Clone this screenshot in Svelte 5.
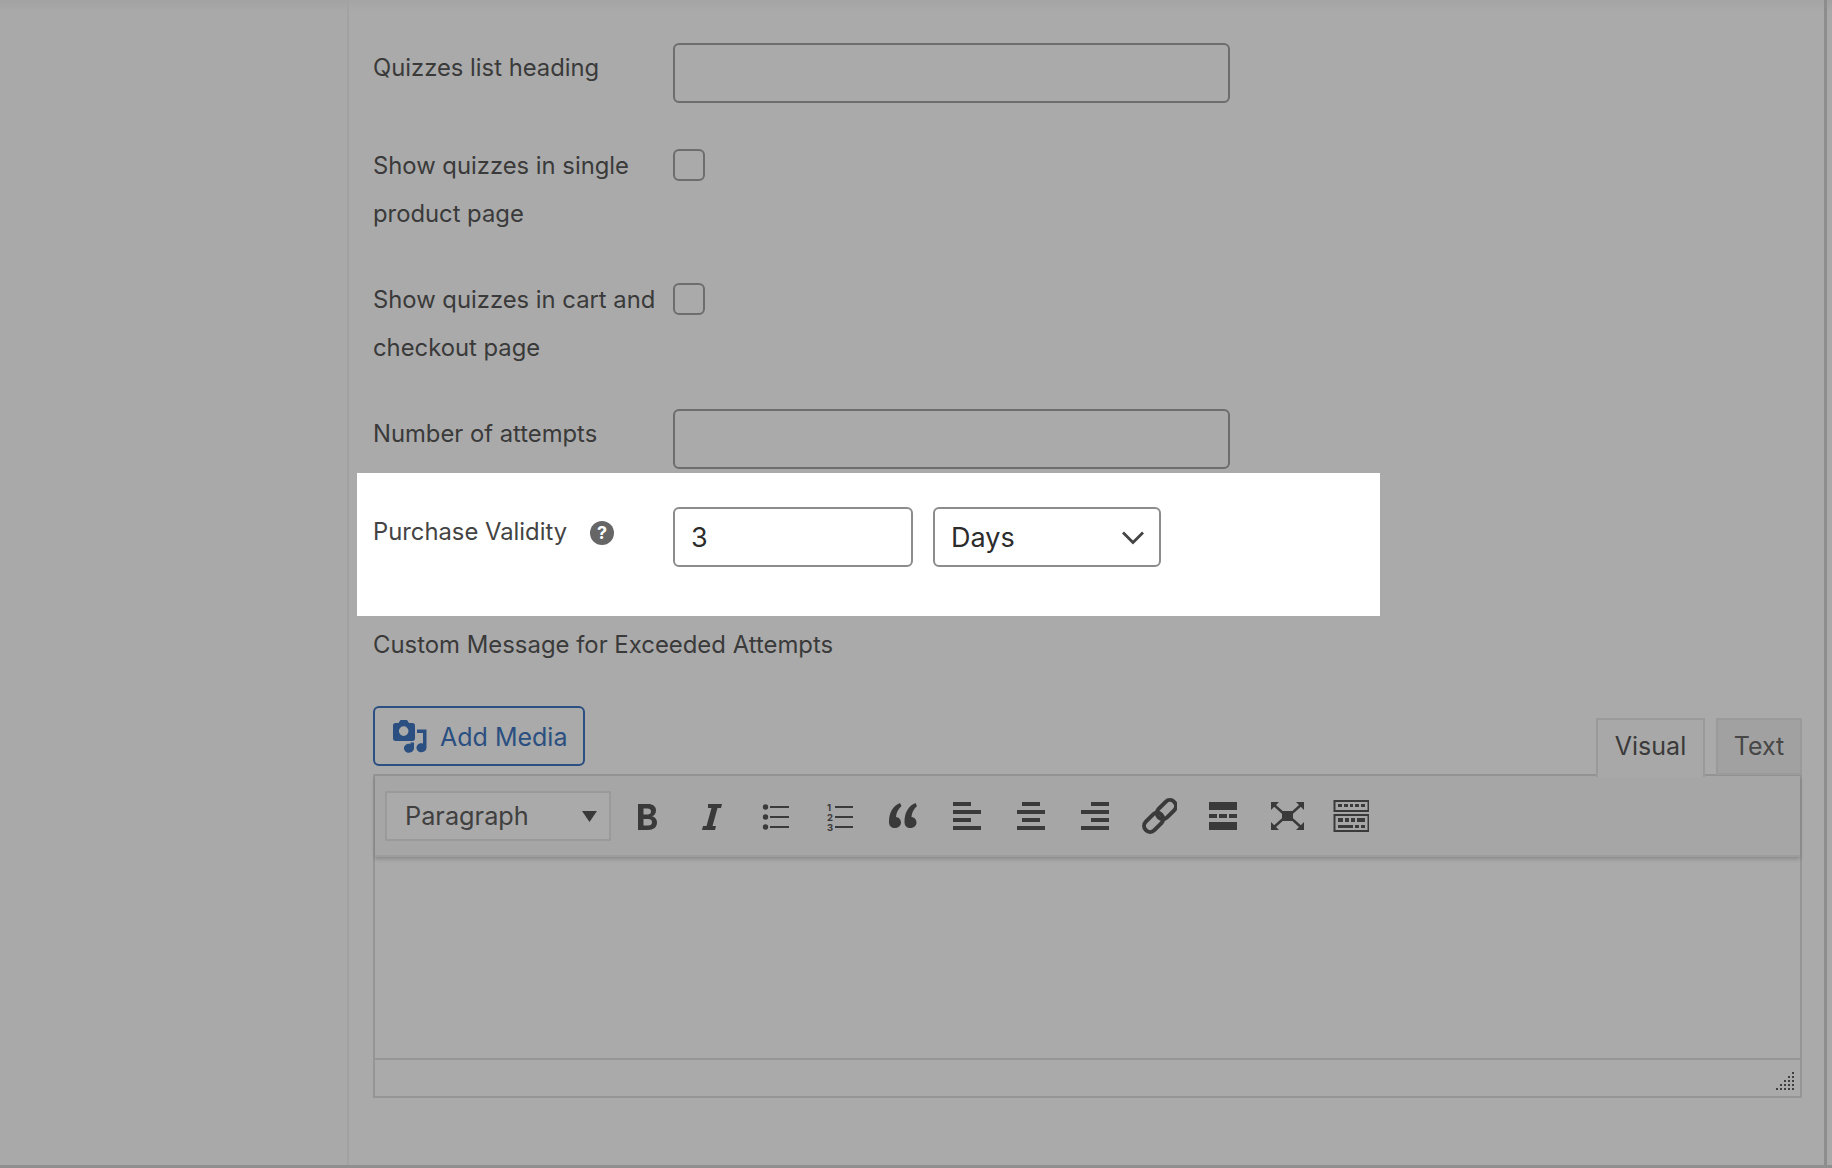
<script>
  const grip = [];
  for (let r = 0; r < 5; r++) for (let c = 4 - r; c < 5; c++) grip.push({ x: c * 4, y: r * 4 });
</script>

<div class="page">
  <div class="gutter"></div>
  <div class="panel">
    <div class="row">
      <label class="label" for="q">Quizzes list heading</label>
      <input id="q" class="text" />
    </div>
    <div class="row">
      <label class="label" for="s1">Show quizzes in single product page</label>
      <input id="s1" class="check" type="checkbox" />
    </div>
    <div class="row">
      <label class="label" for="s2">Show quizzes in cart and checkout page</label>
      <input id="s2" class="check" type="checkbox" />
    </div>
    <div class="row tight">
      <label class="label" for="n">Number of attempts</label>
      <input id="n" class="text" />
    </div>

    <div class="row spot">
      <div class="label help-label">
        <span>Purchase Validity</span>
        <span class="help">?</span>
      </div>
      <input class="text small" value="3" />
      <div class="select">
        <span>Days</span>
        <svg width="24" height="15" viewBox="0 0 24 15"><path d="M2 2.500l10 10 10-10" fill="none" stroke="#444" stroke-width="2.800" /></svg>
      </div>
    </div>

    <div class="custom">Custom Message for Exceeded Attempts</div>

    <div class="tools">
      <button class="media">
        <svg width="34" height="33" viewBox="0 0 34 33">
          <path fill-rule="evenodd" d="M7.500 0h6.500l2 3h3.500c1.500 0 2.500 1 2.500 2.500V18.500c0 1.500-1 2.500-2.500 2.500H2.500C1 21 0 20 0 18.500V5.500C0 4 1 3 2.500 3h3zM10.700 6.300a4.800 4.800 0 1 0 0 9.600a4.800 4.800 0 0 0 0-9.600z" />
          <path d="M24 9.500h9.500V27.500c0 2.700-2.200 4.700-5 4.700s-5-2-5-4.500 2.200-4.500 5-4.500c.5 0 1 .1 1.500.2V13H24z" />
          <path d="M17.500 22.500H21V28c0 2.600-2.200 4.700-5 4.700s-5-2-5-4.500 2.200-4.500 5-4.500c.5 0 1 .1 1.500.2z" />
        </svg>
        <span>Add Media</span>
      </button>
      <div class="tabs">
        <span class="tab active">Visual</span>
        <span class="tab">Text</span>
      </div>
    </div>

    <div class="editor">
      <div class="toolbar">
        <div class="format">
          <span>Paragraph</span>
          <svg width="15" height="11" viewBox="0 0 15 11"><path d="M0 0h15l-7.500 11z" /></svg>
        </div>
        <div class="btns">
          <span class="btn"><svg viewBox="0 0 36 36"><path fill-rule="evenodd" d="M9 6h10c5 0 8 2.500 8 6.500 0 3-1.600 5-4 5.800 3 .7 5 3 5 6.200 0 4.600-3.400 7.500-9 7.500H9zM14.500 10.500v6h4c2.300 0 3.500-1.100 3.500-3s-1.200-3-3.500-3zM14.500 21v6.500H19c2.600 0 4-1.200 4-3.300s-1.400-3.200-4-3.200z" /></svg></span>
          <span class="btn"><svg viewBox="0 0 36 36"><path d="M15 6h14l-1 4h-3.500l-5 18H23l-1 4H9l1-4h3.500l5-18H15z" /></svg></span>
          <span class="btn"><svg viewBox="0 0 36 36"><circle cx="8.500" cy="9" r="2.700" /><circle cx="8.500" cy="19" r="2.700" /><circle cx="8.500" cy="29" r="2.700" /><rect x="13" y="8" width="19" height="2" /><rect x="13" y="18" width="19" height="2" /><rect x="13" y="28" width="19" height="2" /></svg></span>
          <span class="btn"><svg viewBox="0 0 36 36"><text x="6" y="13" class="num">1</text><text x="6" y="23" class="num">2</text><text x="6" y="33" class="num">3</text><rect x="14" y="8" width="18" height="2" /><rect x="14" y="18" width="18" height="2" /><rect x="14" y="28" width="18" height="2" /></svg></span>
          <span class="btn"><svg viewBox="0 0 36 36"><path d="M15 5C8 8 4 14 4 24c0 4 2.500 6 6 6 3.500 0 6-2.500 6-5.500s-2.200-5.300-5-5.500c.2-4 2-8 5.500-11z" /><path d="M30.500 5c-7 3-11 9-11 19 0 4 2.500 6 6 6 3.500 0 6-2.500 6-5.500s-2.200-5.300-5-5.500c.2-4 2-8 5.500-11z" /></svg></span>
          <span class="btn"><svg viewBox="0 0 36 36"><rect x="4" y="4" width="18" height="4" /><rect x="4" y="12" width="28" height="4" /><rect x="4" y="20" width="18" height="4" /><rect x="4" y="28" width="28" height="4" /></svg></span>
          <span class="btn"><svg viewBox="0 0 36 36"><rect x="9" y="4" width="18" height="4" /><rect x="4" y="12" width="28" height="4" /><rect x="9" y="20" width="18" height="4" /><rect x="4" y="28" width="28" height="4" /></svg></span>
          <span class="btn"><svg viewBox="0 0 36 36"><rect x="14" y="4" width="18" height="4" /><rect x="4" y="12" width="28" height="4" /><rect x="14" y="20" width="18" height="4" /><rect x="4" y="28" width="28" height="4" /></svg></span>
          <span class="btn"><svg viewBox="0 0 36 36"><g transform="rotate(-45 19 18)" fill="none" stroke="#3a3a3a" stroke-width="4"><rect x="-1" y="12" width="22" height="12" rx="6" /><rect x="17" y="12" width="22" height="12" rx="6" /></g></svg></span>
          <span class="btn"><svg viewBox="0 0 36 36"><rect x="4" y="4" width="28" height="8" /><rect x="4" y="16" width="8" height="4" /><rect x="14" y="16" width="8" height="4" /><rect x="24" y="16" width="8" height="4" /><rect x="4" y="24" width="28" height="8" /></svg></span>
          <span class="btn"><svg viewBox="0 0 36 36"><rect x="13" y="13" width="11" height="10" /><path d="M2 4h8l-8 8zM35 4h-8l8 8zM2 32h8l-8-8zM35 32h-8l8-8z" /><path d="M4 6l10 9M33 6L23 15M4 30l10-9M33 30L23 21" stroke="#3a3a3a" stroke-width="2.400" /></svg></span>
          <span class="btn"><svg viewBox="0 0 36 36"><rect x="1.500" y="3" width="34" height="10" fill="none" stroke="#3a3a3a" stroke-width="2" /><rect x="1.500" y="17" width="34" height="16" fill="none" stroke="#3a3a3a" stroke-width="2" /><path d="M5 6h4v3H5zM11 6h4v3h-4zM17 6h3v3h-3zM22 6h4v3h-4zM28 6h4v3h-4zM5 20h5v4H5zM12 20h4v4h-4zM18 20h4v4h-4zM24 20h8v4h-8zM5 27h15v3H5zM22 27h4v3h-4zM28 27h4v3h-4z" /></svg></span>
        </div>
      </div>
      <div class="area"></div>
      <div class="status">
        <svg class="grip" width="18" height="18" viewBox="0 0 18 18">
          {#each grip as d}<rect x={d.x} y={d.y} width="2" height="2" />{/each}
        </svg>
      </div>
    </div>
  </div>
</div>

<style>
  :global(body) { margin: 0; background: #aaa; }
  .page {
    display: flex;
    width: 1832px;
    height: 1168px;
    box-sizing: border-box;
    background: linear-gradient(#a2a2a2, #a9a9a9 12px, #a9a9a9);
    border-bottom: 3px solid #8f8f8f;
    font-family: Inter, "Liberation Sans", sans-serif;
    color: #3a3a3a;
    overflow: hidden;
  }
  .gutter { width: 347px; flex: none; }
  .panel {
    width: 1480px;
    box-sizing: border-box;
    flex: none;
    padding: 43px 22px 0 24px;
    background: linear-gradient(#a4a4a4, #aaa 12px, #aaa);
    border-left: 2px solid #a2a2a2;
    border-right: 3px solid #8d8d8d;
  }
  .row {
    display: flex;
    align-items: flex-start;
    margin-bottom: 38px;
  }
  .row.tight { margin-bottom: 4px; }
  .label {
    width: 300px;
    flex: none;
    box-sizing: border-box;
    padding-top: 1px;
    margin-bottom: -1px;
    padding-right: 8px;
    font-size: 23.800px;
    line-height: 48px;
    color: #3a3a3a;
  }
  .text {
    width: 557px;
    height: 60px;
    box-sizing: border-box;
    margin: 0;
    padding: 0 16px;
    background: transparent;
    border: 2px solid #6d6d6d;
    border-radius: 6px;
    font: 27px Inter, "Liberation Sans", sans-serif;
    color: #2c2c2c;
  }
  .check {
    appearance: none;
    width: 32px;
    height: 32px;
    margin: 8px 0 0;
    background: transparent;
    border: 2px solid #6d6d6d;
    border-radius: 6px;
  }
  .spot {
    width: 1023px;
    height: 143px;
    box-sizing: border-box;
    margin: 0 0 5px -16px;
    padding: 34px 0 0 16px;
    background: #fff;
  }
  .help-label { display: flex; align-items: center; height: 49px; color: #444; }
  .help {
    display: flex;
    align-items: center;
    justify-content: center;
    width: 24px;
    height: 24px;
    margin: 2px 0 0 23px;
    border-radius: 50%;
    background: #666;
    color: #fff;
    font-size: 18px;
    font-weight: 700;
  }
  .small { width: 240px; border-color: #8c8c8c; }
  .select {
    display: flex;
    align-items: center;
    justify-content: space-between;
    width: 228px;
    height: 60px;
    box-sizing: border-box;
    margin-left: 20px;
    padding: 0 14px 0 16px;
    border: 2px solid #8c8c8c;
    border-radius: 6px;
    font-size: 27px;
    color: #2c2c2c;
  }
  .custom {
    font-size: 23.900px;
    line-height: 48px;
    margin-bottom: 37px;
  }
  .tools {
    display: flex;
    justify-content: space-between;
    align-items: flex-start;
    height: 70px;
  }
  .media {
    display: flex;
    align-items: center;
    gap: 13px;
    width: 212px;
    height: 60px;
    box-sizing: border-box;
    padding: 2px 0 0 18px;
    background: transparent;
    border: 2px solid #2a4f80;
    border-radius: 6px;
    font: 25px Inter, "Liberation Sans", sans-serif;
    color: #2a4f80;
  }
  .media svg { fill: #2a4f80; flex: none; margin-top: -2px; }
  .tabs {
    display: flex;
    gap: 11px;
    align-items: flex-start;
    margin-top: 12px;
    position: relative;
    z-index: 1;
  }
  .tab {
    display: flex;
    align-items: center;
    justify-content: center;
    height: 57px;
    box-sizing: border-box;
    width: 86px;
    padding-bottom: 2px;
    background: #a1a1a1;
    border: 2px solid #9a9a9a;
    font-size: 25px;
    color: #474747;
  }
  .tab.active {
    width: 109px;
    height: 59px;
    padding-bottom: 6px;
    background: #a8a8a8;
    border-bottom: none;
    color: #3a3a3a;
  }
  .editor {
    border: 2px solid #959595;
    height: 324px;
    box-sizing: border-box;
    margin-top: -2px;
    display: flex;
    flex-direction: column;
  }
  .toolbar {
    display: flex;
    align-items: center;
    height: 81px;
    flex: none;
    box-sizing: border-box;
    padding: 0 0 0 10px;
    background: #a6a6a6;
    box-shadow: 0 2px 4px rgba(0, 0, 0, 0.2);
    border-bottom: 2px solid #9c9c9c;
    position: relative;
  }
  .format {
    display: flex;
    align-items: center;
    justify-content: space-between;
    width: 226px;
    height: 50px;
    box-sizing: border-box;
    padding: 0 12px 0 18px;
    background: #aaa;
    border: 2px solid #9a9a9a;
    font-size: 25.300px;
    color: #404040;
  }
  .format svg { fill: #3a3a3a; margin-top: 2px; }
  .btns { display: flex; margin-left: 4px; }
  .btn {
    display: flex;
    align-items: center;
    justify-content: center;
    width: 64px;
    height: 50px;
  }
  .btn svg { width: 36px; height: 36px; fill: #3a3a3a; }
  .num { font: 700 9.500px Inter, sans-serif; }
  .area { flex: 1; }
  .status {
    position: relative;
    height: 36px;
    flex: none;
    border-top: 2px solid #969696;
  }
  .grip { position: absolute; right: 6px; bottom: 6px; fill: #3f3f3f; }
</style>
